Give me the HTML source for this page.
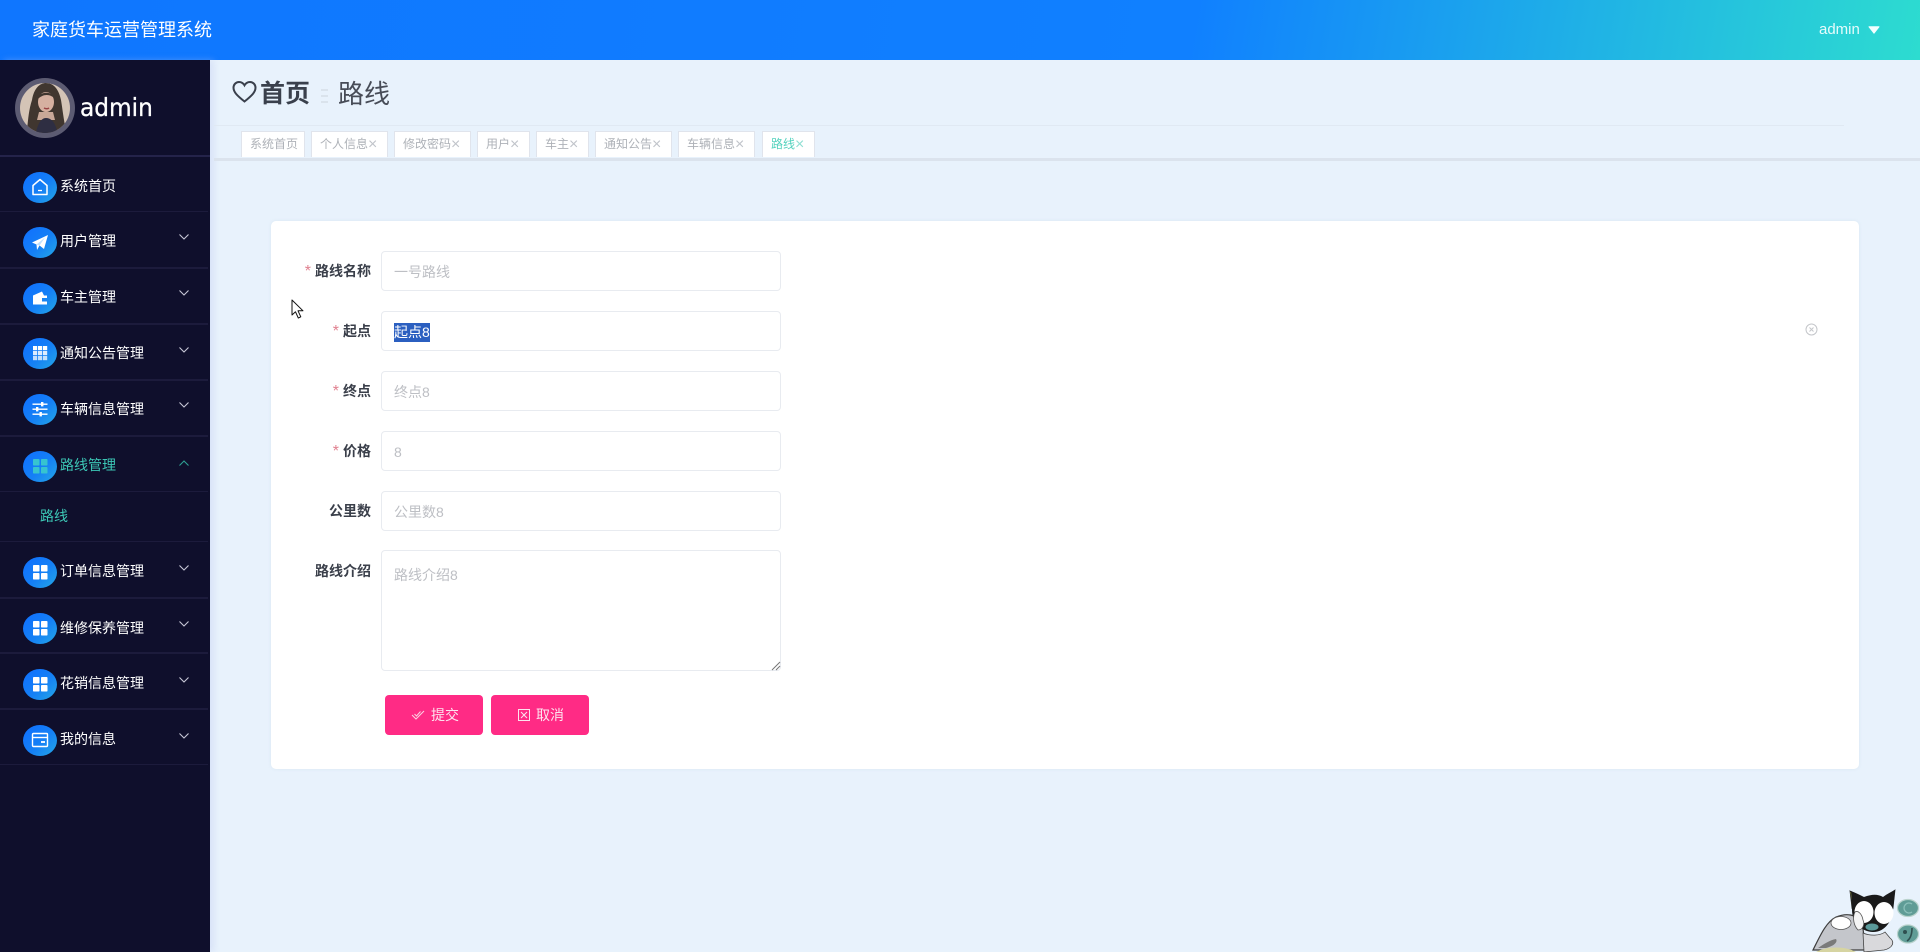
<!DOCTYPE html>
<html lang="zh-CN">
<head>
<meta charset="utf-8">
<title>家庭货车运营管理系统</title>
<style>
*{box-sizing:border-box;margin:0;padding:0}
html,body{width:1920px;height:952px;overflow:hidden;background:#e8f2fc;font-family:"Liberation Sans","Noto Sans CJK SC",sans-serif}
#root{position:absolute;left:0;top:0;width:1920px;height:952px;filter:blur(.3px)}
.a{position:absolute}
#hd{left:0;top:0;width:1920px;height:60px;background:linear-gradient(100deg,#0f76ff 0%,#1080ff 62%,#2ddcd0 100%);color:#fff}
#side{left:0;top:60px;width:210px;height:892px;background:#0f0f2c;box-shadow:4px 0 6px rgba(190,200,240,.35)}
.sep{position:absolute;left:0;width:208px;height:1px;background:#1c1b3c}
.ic{position:absolute;left:23px;width:34px;height:31px;border-radius:50%;background:linear-gradient(135deg,#0f6fff 0%,#1580f5 55%,#25a8e6 100%)}
.ic svg{position:absolute;left:7px;top:5px;width:20px;height:20px}
.mt{position:absolute;left:60px;font-size:14px;line-height:20px;color:#fff;white-space:nowrap}
.ch{position:absolute;left:179px;width:10px;height:6px}
.tab{position:absolute;top:131px;height:26px;background:#fff;border:1px solid #e0e4ec;border-bottom:none;font-size:12px;line-height:25px;color:#aeb2b8;padding-left:8px;white-space:nowrap}
.tab b{font-weight:400;font-size:16px;line-height:12px;vertical-align:-1px;color:#c0c4ca}
.lb{position:absolute;right:1549px;font-size:14px;font-weight:700;color:#3a3f4a;line-height:20px;white-space:nowrap}
.lb i{font-style:normal;font-weight:400;font-size:16px;line-height:14px;color:#e0808f;margin-right:4px}
.inp{position:absolute;left:381px;width:400px;height:40px;background:#fff;border:1px solid #e8ebf0;border-radius:4px;font-size:14px;line-height:40px;color:#bdbfc4;padding-left:12px}
.btn{position:absolute;top:695px;width:98px;height:40px;background:#ff2b85;border-radius:4px;color:#fde3ee;font-size:14px;line-height:40px;white-space:nowrap}
</style>
</head>
<body>
<div id="root">
<div class="a" id="hd">
  <div class="a" style="left:32px;top:16px;font-size:18px;line-height:28px;white-space:nowrap">家庭货车运营管理系统</div>
  <div class="a" style="left:1819px;top:20px;font-size:15px;line-height:20px;color:#e6fbfb">admin</div>
  <svg class="a" style="left:1868px;top:26px" width="12" height="8"><path d="M1 .8H11L6 7.200Z" fill="#f2ffff" stroke="#f2ffff" stroke-width="1" stroke-linejoin="round"/></svg>
</div>

<div class="a" id="side">
  <!-- avatar -->
  <svg class="a" style="left:15px;top:18px" width="60" height="60" viewBox="0 0 60 60">
    <defs><clipPath id="cp"><circle cx="30" cy="30" r="25"/></clipPath></defs>
    <circle cx="30" cy="30" r="30" fill="#5c5b72"/>
    <g clip-path="url(#cp)">
      <rect width="60" height="60" fill="#d4c4b6"/>
      <path d="M11 60C13 46 13 34 17 22C19 10 25 5 31 5C39 5 44 12 46 22C48 34 49 46 53 60Z" fill="#40362f"/>
      <ellipse cx="31" cy="24" rx="8" ry="10" fill="#d6b0a0"/>
      <path d="M22 22C23 13 38 12 40 21C36 16 28 15 22 22Z" fill="#40362f"/>
      <path d="M29 30q3 1.500 5 0" stroke="#9a4444" stroke-width="1.500" fill="none"/>
      <path d="M24 34L38 34L40 42L22 42Z" fill="#c9a898"/>
      <path d="M20 60C22 46 26 40 31 40C37 40 42 46 43 60Z" fill="#2e2e42"/>
    </g>
  </svg>
  <div class="a" style="left:80px;top:30px;font-size:25px;line-height:36px;color:#fff;font-family:'DejaVu Sans','Liberation Sans',sans-serif;transform-origin:0 50%;transform:scaleX(.93);-webkit-text-stroke:.3px #fff">admin</div>
</div>

<!-- sidebar menu -->
<div class="sep" style="top:155px;background:#24234a;width:210px;height:2px"></div>
<div class="sep" style="top:211px"></div>
<div class="sep" style="top:267px;height:2px"></div>
<div class="sep" style="top:323px;height:2px"></div>
<div class="sep" style="top:379px;height:2px"></div>
<div class="sep" style="top:435px;height:2px"></div>
<div class="sep" style="top:491px"></div>
<div class="sep" style="top:541px"></div>
<div class="sep" style="top:597px;height:2px"></div>
<div class="sep" style="top:652px;height:2px"></div>
<div class="sep" style="top:708px;height:2px"></div>
<div class="sep" style="top:764px"></div>

<div class="ic" style="top:172px"><svg viewBox="0 0 20 20" fill="none" stroke="#fff" stroke-width="1.500"><path d="M3 8.500L10 2.500L17 8.500V17.500H3Z" stroke-linejoin="round"/><path d="M8 13.500h4" stroke-width="1.300"/></svg></div>
<div class="mt" style="top:176px">系统首页</div>

<div class="ic" style="top:227px"><svg viewBox="0 0 20 20"><path d="M2 10.500L18 3L14 17L9.500 13.500L7 18L6.500 12.500Z" fill="#fff"/><path d="M6.500 12.500L15 5.500L9.500 13.500" fill="#bfe0ff"/></svg></div>
<div class="mt" style="top:231px">用户管理</div>
<svg class="ch" style="top:234px" viewBox="0 0 10 6"><path d="M.5 .5L5 5L9.500 .5" fill="none" stroke="#c9c9d8" stroke-width="1.100"/></svg>

<div class="ic" style="top:283px"><svg viewBox="0 0 20 20"><path d="M3 7.500L12 3.500L14 7.500H17V16.500H3Z" fill="#fff"/><rect x="12" y="10" width="6" height="3.500" fill="#1a86f3"/></svg></div>
<div class="mt" style="top:287px">车主管理</div>
<svg class="ch" style="top:290px" viewBox="0 0 10 6"><path d="M.5 .5L5 5L9.500 .5" fill="none" stroke="#c9c9d8" stroke-width="1.100"/></svg>

<div class="ic" style="top:338px"><svg viewBox="0 0 20 20" fill="#fff"><rect x="3" y="3" width="4.200" height="4.200"/><rect x="8" y="3" width="4.200" height="4.200"/><rect x="13" y="3" width="4.200" height="4.200"/><rect x="3" y="8" width="4.200" height="4.200" opacity=".85"/><rect x="8" y="8" width="4.200" height="4.200" opacity=".85"/><rect x="13" y="8" width="4.200" height="4.200" opacity=".85"/><rect x="3" y="13" width="4.200" height="4.200" opacity=".75"/><rect x="8" y="13" width="4.200" height="4.200" opacity=".75"/><rect x="13" y="13" width="4.200" height="4.200" opacity=".75"/></svg></div>
<div class="mt" style="top:343px">通知公告管理</div>
<svg class="ch" style="top:347px" viewBox="0 0 10 6"><path d="M.5 .5L5 5L9.500 .5" fill="none" stroke="#c9c9d8" stroke-width="1.100"/></svg>

<div class="ic" style="top:394px"><svg viewBox="0 0 20 20" fill="#fff"><rect x="2.500" y="4.500" width="15" height="1.400"/><rect x="2.500" y="9.500" width="15" height="1.400"/><rect x="2.500" y="14.500" width="15" height="1.400"/><rect x="11" y="3" width="2.400" height="4.400"/><rect x="6" y="8" width="2.400" height="4.400"/><rect x="9.500" y="13" width="2.400" height="4.400"/></svg></div>
<div class="mt" style="top:399px">车辆信息管理</div>
<svg class="ch" style="top:402px" viewBox="0 0 10 6"><path d="M.5 .5L5 5L9.500 .5" fill="none" stroke="#c9c9d8" stroke-width="1.100"/></svg>

<div class="ic" style="top:451px"><svg viewBox="0 0 20 20" fill="#37c4cf"><rect x="3" y="3" width="6.500" height="6.500" rx=".8"/><rect x="11" y="3" width="6.500" height="6.500" rx=".8"/><rect x="3" y="11" width="6.500" height="6.500" rx=".8"/><rect x="11" y="11" width="6.500" height="6.500" rx=".8"/></svg></div>
<div class="mt" style="top:455px;color:#3cc7b6">路线管理</div>
<svg class="ch" style="top:460px" viewBox="0 0 10 6"><path d="M.5 5.500L5 1L9.500 5.500" fill="none" stroke="#2e9f93" stroke-width="1.100"/></svg>
<div class="mt" style="left:40px;top:506px;color:#3cc7b6">路线</div>

<div class="ic" style="top:557px"><svg viewBox="0 0 20 20" fill="#fff"><rect x="3" y="3" width="6.500" height="6.500" rx=".8"/><rect x="11" y="3" width="6.500" height="6.500" rx=".8"/><rect x="3" y="11" width="6.500" height="6.500" rx=".8"/><rect x="11" y="11" width="6.500" height="6.500" rx=".8"/></svg></div>
<div class="mt" style="top:561px">订单信息管理</div>
<svg class="ch" style="top:565px" viewBox="0 0 10 6"><path d="M.5 .5L5 5L9.500 .5" fill="none" stroke="#c9c9d8" stroke-width="1.100"/></svg>

<div class="ic" style="top:613px"><svg viewBox="0 0 20 20" fill="#fff"><rect x="3" y="3" width="6.500" height="6.500" rx=".8"/><rect x="11" y="3" width="6.500" height="6.500" rx=".8"/><rect x="3" y="11" width="6.500" height="6.500" rx=".8"/><rect x="11" y="11" width="6.500" height="6.500" rx=".8"/></svg></div>
<div class="mt" style="top:618px">维修保养管理</div>
<svg class="ch" style="top:621px" viewBox="0 0 10 6"><path d="M.5 .5L5 5L9.500 .5" fill="none" stroke="#c9c9d8" stroke-width="1.100"/></svg>

<div class="ic" style="top:669px"><svg viewBox="0 0 20 20" fill="#fff"><rect x="3" y="3" width="6.500" height="6.500" rx=".8"/><rect x="11" y="3" width="6.500" height="6.500" rx=".8"/><rect x="3" y="11" width="6.500" height="6.500" rx=".8"/><rect x="11" y="11" width="6.500" height="6.500" rx=".8"/></svg></div>
<div class="mt" style="top:673px">花销信息管理</div>
<svg class="ch" style="top:677px" viewBox="0 0 10 6"><path d="M.5 .5L5 5L9.500 .5" fill="none" stroke="#c9c9d8" stroke-width="1.100"/></svg>

<div class="ic" style="top:725px"><svg viewBox="0 0 20 20" fill="none" stroke="#fff" stroke-width="1.400"><rect x="2.500" y="3.500" width="15" height="13" rx="1"/><path d="M2.500 7.500H17.500"/><path d="M11 12h4" stroke-width="1.800"/></svg></div>
<div class="mt" style="top:729px">我的信息</div>
<svg class="ch" style="top:733px" viewBox="0 0 10 6"><path d="M.5 .5L5 5L9.500 .5" fill="none" stroke="#c9c9d8" stroke-width="1.100"/></svg>

<!-- page head -->
<div class="a" style="left:214px;top:125px;width:1630px;height:1px;background:#e0e9f3"></div>
<svg class="a" style="left:232px;top:80px" width="25" height="24" viewBox="0 0 25 24"><path d="M12.500 21.500C5 15.500 1.500 12 1.500 7.800C1.500 4.400 4 2 7 2C9.300 2 11.300 3.200 12.500 5.300C13.700 3.200 15.700 2 18 2C21 2 23.500 4.400 23.500 7.800C23.500 12 20 15.500 12.500 21.500Z" fill="none" stroke="#3a404c" stroke-width="2"/></svg>
<div class="a" style="left:260px;top:76px;font-size:25px;line-height:36px;font-weight:700;color:#3a404c;white-space:nowrap">首页</div>
<svg class="a" style="left:321px;top:89px" width="8" height="15"><path d="M0 1H7M0 7H7M0 13H7" stroke="#cdd4dc" stroke-width="1"/></svg>
<div class="a" style="left:338px;top:76px;font-size:26px;line-height:36px;color:#474c57;white-space:nowrap">路线</div>

<!-- tabs -->
<div class="a" style="left:214px;top:158px;width:1706px;height:3px;background:#dbe3ed"></div>
<div class="tab" style="left:241px;width:64px">系统首页</div>
<div class="tab" style="left:311px;width:77px">个人信息<b>×</b></div>
<div class="tab" style="left:394px;width:77px">修改密码<b>×</b></div>
<div class="tab" style="left:477px;width:53px">用户<b>×</b></div>
<div class="tab" style="left:536px;width:53px">车主<b>×</b></div>
<div class="tab" style="left:595px;width:77px">通知公告<b>×</b></div>
<div class="tab" style="left:678px;width:77px">车辆信息<b>×</b></div>
<div class="tab" style="left:762px;width:53px;color:#55d2be">路线<b style="color:#8fdfd3">×</b></div>

<!-- card -->
<div class="a" style="left:271px;top:221px;width:1588px;height:548px;background:#fff;border-radius:5px;box-shadow:0 0 3px rgba(210,225,240,.7)"></div>

<div class="lb" style="top:261px"><i>*</i>路线名称</div>
<div class="inp" style="top:251px">一号路线</div>

<div class="lb" style="top:321px"><i>*</i>起点</div>
<div class="inp" style="top:311px;color:#fff"><span style="background:#2b5fc0;display:inline-block;line-height:19px;height:19px;vertical-align:0">起点8</span></div>
<svg class="a" style="left:1805px;top:323px" width="13" height="13" viewBox="0 0 13 13"><circle cx="6.500" cy="6.500" r="5.500" fill="none" stroke="#c4c6ca" stroke-width="1"/><path d="M4.500 4.500L8.500 8.500M8.500 4.500L4.500 8.500" stroke="#c4c6ca" stroke-width="1"/></svg>

<div class="lb" style="top:381px"><i>*</i>终点</div>
<div class="inp" style="top:371px">终点8</div>

<div class="lb" style="top:441px"><i>*</i>价格</div>
<div class="inp" style="top:431px">8</div>

<div class="lb" style="top:501px">公里数</div>
<div class="inp" style="top:491px">公里数8</div>

<div class="lb" style="top:561px">路线介绍</div>
<div class="inp" style="top:550px;height:121px;line-height:20px;padding-top:14px">路线介绍8</div>
<svg class="a" style="left:771px;top:661px" width="10" height="10"><path d="M1 9L9 1M5 9L9 5" stroke="#777" stroke-width="1"/></svg>

<div class="btn" style="left:385px"><svg class="a" style="left:26px;top:14px" width="14" height="12" viewBox="0 0 14 12"><path d="M1 6L5 10L13 2M3.500 5L5.500 7L9.500 2.500" fill="none" stroke="#fbd2e3" stroke-width="1"/></svg><span class="a" style="left:46px">提交</span></div>
<div class="btn" style="left:491px"><svg class="a" style="left:27px;top:14px" width="12" height="12" viewBox="0 0 12 12"><rect x=".5" y=".5" width="11" height="11" fill="none" stroke="#fde3ee"/><path d="M3 3L9 9M9 3L3 9" stroke="#fde3ee"/></svg><span class="a" style="left:45px">取消</span></div>

<!-- mouse cursor -->
<svg class="a" style="left:291px;top:299px" width="14" height="21" viewBox="0 0 14 21"><path d="M1 1V16L4.500 12.800L7.300 19L9.800 17.800L7 11.800H12Z" fill="#fff" stroke="#111" stroke-width="1" stroke-linejoin="round"/></svg>

<!-- mascot: coordinates match page offset 1780,860 -->
<svg class="a" style="left:1780px;top:860px" width="140" height="92" viewBox="0 0 140 92">
  <path d="M33 90C40 76 46 62 56 57C66 53 76 54 82 62L86 90Z" fill="#c4c6cb" stroke="#3c3c3c" stroke-width="1.200"/>
  <ellipse cx="61" cy="63" rx="10" ry="6.500" fill="#fff" stroke="#555" stroke-width=".8"/>
  <path d="M38 88C44 84 50 80 56 79C58 82 54 86 46 88Z" fill="#7a7a7a"/>
  <path d="M36 92C46 86 66 86 76 92Z" fill="#d6d4a2"/>
  <path d="M70 31L72 48L80 38Z" fill="#c0c65a" stroke="#222" stroke-width=".8"/>
  <path d="M115 30L113 48L103 38Z" fill="#c0c65a" stroke="#222" stroke-width=".8"/>
  <path d="M71 31C76 33 80 35 84 37C92 34 98 34 103 37C107 34 111 32 115 30L113 50C112 60 106 72 93 72C82 72 72 62 72 50Z" fill="#1a1a1a"/>
  <ellipse cx="84" cy="52" rx="9.500" ry="11" fill="#fff"/>
  <ellipse cx="104" cy="53" rx="9.500" ry="11" fill="#fff"/>
  <path d="M75 52C78 50 82 54 83 60C85 64 83 70 78 70C74 66 72 58 75 52Z" fill="#f4f4f4" stroke="#555" stroke-width=".8"/>
  <ellipse cx="92" cy="67" rx="6.500" ry="3.500" fill="#5b9a9a"/>
  <path d="M83 73C90 76 100 76 105 72L110 78C115 82 113 88 104 90L84 92Z" fill="#d9d9dc" stroke="#444" stroke-width=".8"/>
  <ellipse cx="128" cy="48" rx="10.500" ry="8.500" fill="#5f9c96" stroke="#b8d2cc" stroke-width="1.200"/>
  <path d="M132 44A5 5 0 1 0 132 52" fill="none" stroke="#8cc0ba" stroke-width="1.300"/>
  <ellipse cx="128" cy="74" rx="10.500" ry="9" fill="#5f9c96" stroke="#b8d2cc" stroke-width="1.200"/>
  <circle cx="125" cy="72" r="2" fill="#2f4f4f"/>
  <path d="M132 68C132 75 130 79 127 81" fill="none" stroke="#2f4f4f" stroke-width="1.600"/>
</svg>
</div>
</body>
</html>
